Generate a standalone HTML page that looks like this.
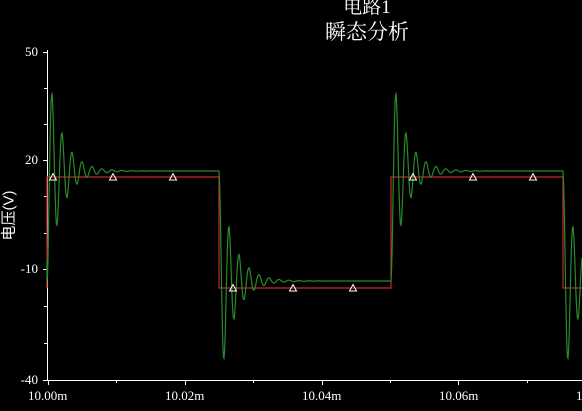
<!DOCTYPE html>
<html><head><meta charset="utf-8"><style>
html,body{margin:0;padding:0;background:#000;}
body{width:582px;height:411px;overflow:hidden;position:relative;}
.t{position:absolute;color:#fff;font-family:"Liberation Serif","Noto Serif CJK SC","Noto Sans CJK SC",serif;white-space:nowrap;}
</style></head><body>
<div class="t" style="left:300px;width:134px;text-align:center;top:-3px;font-size:19px;line-height:22px;">电路1</div>
<div class="t" style="left:300px;width:134px;text-align:center;top:20px;font-size:21px;line-height:24px;">瞬态分析</div>
<div class="t" style="left:-22px;top:205px;font-size:15px;transform:rotate(-90deg);transform-origin:center;width:60px;text-align:center;font-family:'Liberation Sans','Noto Sans CJK SC',sans-serif;">电压(V)</div>
<div class="t" style="right:544px;top:44px;font-size:13px;">50</div>
<div class="t" style="right:544px;top:152px;font-size:13px;">20</div>
<div class="t" style="right:544px;top:261px;font-size:13px;">-10</div>
<div class="t" style="right:544px;top:372px;font-size:13px;">-40</div>
<div class="t" style="left:28px;top:388px;font-size:13px;">10.00m</div>
<div class="t" style="left:165px;top:388px;font-size:13px;">10.02m</div>
<div class="t" style="left:302px;top:388px;font-size:13px;">10.04m</div>
<div class="t" style="left:439px;top:388px;font-size:13px;">10.06m</div>
<div class="t" style="left:576px;top:388px;font-size:13px;">1</div>
<svg id="s" width="582" height="411" style="position:absolute;left:0;top:0" xmlns="http://www.w3.org/2000/svg">
<g stroke="#fff" stroke-width="1" fill="none" shape-rendering="crispEdges">
<path d="M47.5 50V380.5H582"/>
<path d="M43 52.5h4M43 160.5h4M43 269.5h4M43 380.5h4M44 88.5h3M44 124.5h3M44 196.5h3M44 233.5h3M44 306.5h3M44 343.5h3"/>
<path d="M48.5 381v4M116.5 381v2M185.5 381v4M253.5 381v2M322.5 381v4M390.5 381v2M458.5 381v4M527.5 381v2"/>
</g>
<path id="red" stroke="#c0282a" stroke-width="1.2" fill="none" d="M47 288V177H219V288H391V177H563V288H582"/>
<path id="grn" stroke="#2a8a2a" stroke-width="1.2" fill="none"/>
<g id="tri" stroke="#fff" stroke-width="1" fill="none"></g>
</svg>
<script>
var H=171,L=281;
var d="M47 260";
function seg(x0,x1,from,to){
  for(var x=x0;x<=x1;x+=0.5){
    var t=x-x0;
    var v=to+(from-to)*Math.exp(-0.071*t)*Math.cos(2*Math.PI*t/10);
    if(x0==47 && t<1.5) v=to+(from-to)*Math.cos(2*Math.PI*t/10);
    d+="L"+x+" "+v.toFixed(1);
  }
}
seg(47,219,L,H);
seg(219,391,H,L);
seg(391,563,L,H);
seg(563,582,H,L);
document.getElementById('grn').setAttribute('d',d);
var tr=[[53,177],[113,177],[173,177],[233,288],[293,288],[353,288],[413,177],[473,177],[533,177]];
var g='';
tr.forEach(function(p){g+='<path d="M'+(p[0]-3.5)+' '+(p[1]+3)+'L'+p[0]+' '+(p[1]-3.5)+'L'+(p[0]+3.5)+' '+(p[1]+3)+'Z"/>';});
document.getElementById('tri').innerHTML=g;
</script>
</body></html>
